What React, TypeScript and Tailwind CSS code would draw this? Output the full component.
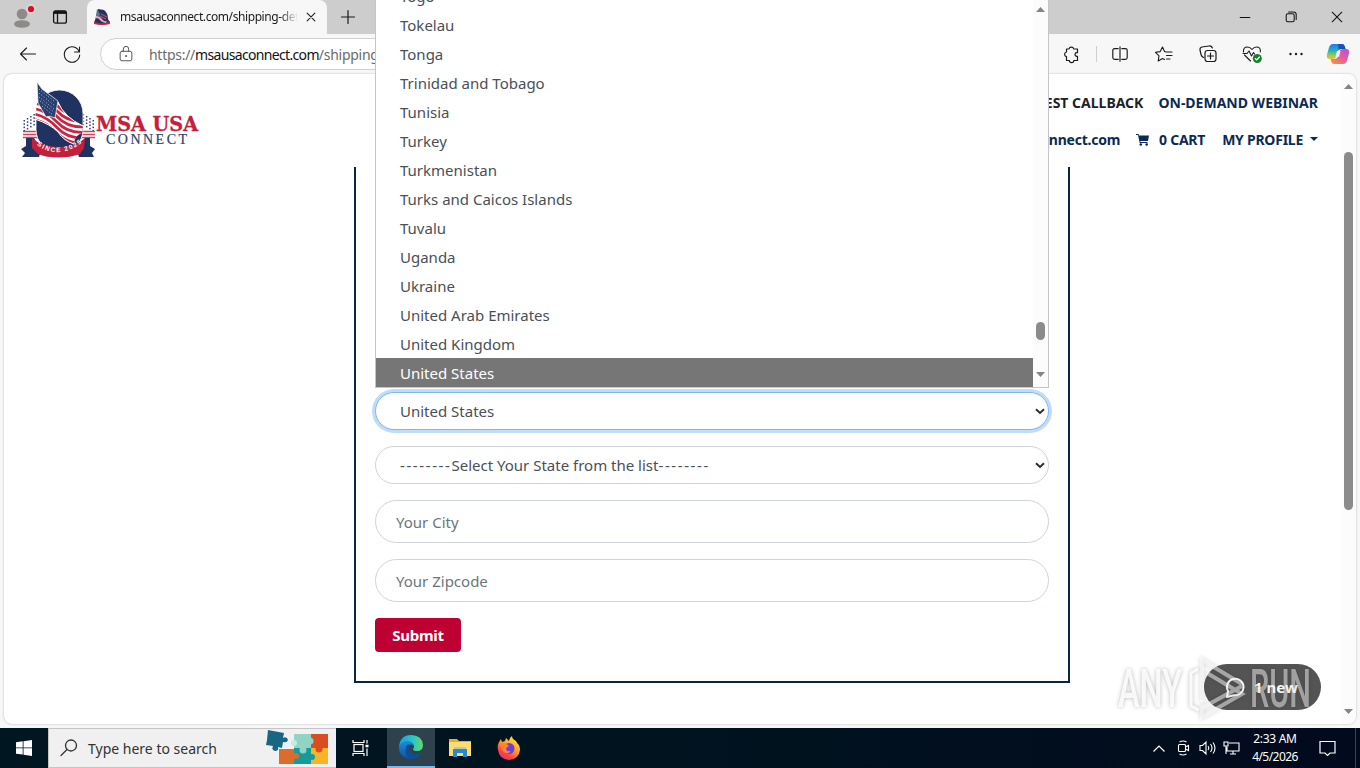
import React from "react";

const countries = [
  "Togo", "Tokelau", "Tonga", "Trinidad and Tobago", "Tunisia", "Turkey", "Turkmenistan",
  "Turks and Caicos Islands", "Tuvalu", "Uganda", "Ukraine", "United Arab Emirates",
  "United Kingdom", "United States",
];

type IconProps = { children: React.ReactNode; className?: string; size?: number; sw?: number };

function Icon({ children, className = "", size = 20, sw = 1.1 }: IconProps) {
  return (
    <svg width={size} height={size} viewBox="0 0 20 20" fill="none" stroke="currentColor" strokeWidth={sw}
      strokeLinecap="round" strokeLinejoin="round" className={`shrink-0 ${className}`}>
      {children}
    </svg>
  );
}

function Favicon() {
  return (
    <svg width="18" height="18" viewBox="0 0 18 18" className="shrink-0">
      <path d="M5 1 L11 2 Q15 5 15 11 L17 15 Q9 18 1 15 L3 9Z" fill="#25345e" />
      <path d="M4 1 L7 6 L6 9 L3 8Z" fill="#64708f" />
      <path d="M3 8 Q7 8 9 11 T14 13 L13 15 Q8 14 7 12 T2 10Z" fill="#e9a7b4" />
      <path d="M1 13 Q9 18 17 13 L17 16 Q9 18 1 16Z" fill="#c22742" />
      <path d="M8 6 L14 9 M7 8 L13 11" stroke="#d4566c" strokeWidth="1" />
    </svg>
  );
}

function TabStrip() {
  return (
    <div className="flex h-[34px] shrink-0 bg-[#cdcdcd]">
      <div className="flex w-[87px] items-center rounded-br-lg pl-3">
        <svg width="24" height="26" viewBox="0 0 24 26">
          <circle cx="10" cy="10" r="5.3" fill="#8d8a87" />
          <ellipse cx="10" cy="20" rx="8" ry="3.8" fill="#8d8a87" />
          <circle cx="19" cy="5" r="5" fill="#e6d0d2" />
          <circle cx="19" cy="5" r="3.1" fill="#d60f24" />
        </svg>
        <svg width="16" height="16" viewBox="0 0 16 16" className="ml-4" fill="none" stroke="#151515" strokeWidth="1.3">
          <rect x="1.6" y="1.8" width="12.8" height="12.4" rx="2" />
          <path d="M2 3.4H14" strokeWidth="3" />
          <path d="M5.5 3V14" />
        </svg>
      </div>
      <div className="flex w-[240px] items-center rounded-t-lg bg-[#f7f7f7] pl-[6px]">
        <Favicon />
        <div className="ml-[9px] w-[178px] overflow-hidden text-[12px] whitespace-nowrap text-[#1b1b1b] [mask-image:linear-gradient(to_right,black_160px,transparent_178px)] tracking-[-0.42px]">
          msausaconnect.com/shipping-details
        </div>
        <Icon size={14} sw={1.5} className="ml-[6px] text-[#1b1b1b]"><path d="M4.500 4.500L15.500 15.500M15.500 4.500L4.500 15.500" /></Icon>
      </div>
      <div className="flex w-[42px] items-center justify-center text-[#1b1b1b]">
        <Icon size={20} sw={1.2}><path d="M10 3.500V16.500M3.500 10H16.500" /></Icon>
      </div>
      <div className="ml-auto flex items-center text-[#111]">
        <div className="flex w-[46px] justify-center"><Icon size={16} sw={1.3}><path d="M4 10.6H16" /></Icon></div>
        <div className="flex w-[46px] justify-center">
          <Icon size={16} sw={1.3}><rect x="4" y="6" width="10" height="10" rx="2" /><path d="M7 3.7H13Q16.5 3.7 16.5 7V13" /></Icon>
        </div>
        <div className="flex w-[46px] justify-center"><Icon size={16} sw={1.3}><path d="M4 4L16 16M16 4L4 16" /></Icon></div>
      </div>
    </div>
  );
}

function CopilotLogo() {
  return (
    <svg width="24" height="24" viewBox="0 0 24 24" className="shrink-0">
      <defs>
        <linearGradient id="copA" x1="0" y1="0" x2="0" y2="1">
          <stop offset="0" stopColor="#1d7de2" /><stop offset=".45" stopColor="#25b3c4" />
          <stop offset=".75" stopColor="#9bcb45" /><stop offset="1" stopColor="#f3c228" />
        </linearGradient>
        <linearGradient id="copB" x1="1" y1="0" x2="0" y2="1">
          <stop offset="0" stopColor="#a656e6" /><stop offset=".45" stopColor="#e85a9c" /><stop offset="1" stopColor="#fb9a3c" />
        </linearGradient>
      </defs>
      <path d="M7 2H16Q18 2 18.6 4L19.5 7H15Q12.500 7 11.700 9.500L10 15Q9.300 17 7 17H4Q0 17 1 12.500L3 5.500Q4 2 7 2Z" fill="url(#copA)" />
      <path d="M17 22H8Q6 22 5.400 20L4.500 17H8.500Q11 17 11.800 14.500L13.700 9Q14.300 7 17 7H20Q24 7 23 11.500L21 18.500Q20 22 17 22Z" fill="url(#copB)" />
      <path d="M12 2H16Q18 2 18.600 4L19.500 7H15Q13.500 7 12.600 8Z" fill="#1750c5" />
      <path d="M11 9H14.500L13 14.800H9.500Z" fill="#f4f2fa" />
    </svg>
  );
}

function Toolbar() {
  return (
    <div className="flex h-10 shrink-0 items-center bg-[#f7f7f7] text-[#1b1b1b]">
      <Icon size={20} className="ml-[18px]"><path d="M17.500 10H2.500M8.500 4L2.500 10L8.500 16" /></Icon>
      <Icon size={20} className="ml-6"><path d="M17.300 8A7.700 7.700 0 1 0 17.700 11M17.500 3V8H12.500" /></Icon>
      <div className="ml-[18px] flex h-8 w-[900px] items-center rounded-full border border-[#d0d0d0] bg-white pl-4">
        <Icon size={18} className="text-[#555]">
          <rect x="3.500" y="7" width="13" height="10.500" rx="2" /><path d="M7 7V4.500a3 3 0 0 1 6 0V7" /><circle cx="10" cy="12.300" r=".6" fill="currentColor" />
        </Icon>
        <div className="ml-[14px] text-[14px] tracking-[-0.28px] whitespace-nowrap text-[#6b6b6b]">
          https://<span className="tracking-[-0.66px] text-[#111]">msausaconnect.com</span>/shipping-details
        </div>
      </div>
      <div className="ml-auto flex items-center">
        <Icon size={20} sw={1.200} className="-translate-x-px"><path d="M7 5A2.400 2.400 0 0 1 11.700 5H15.500V8.700H14.800A1.800 1.800 0 0 0 14.800 12.300H15.500V16.500H11.800A2.200 2.200 0 0 1 7.400 16.500H4.500V12.700A2.400 2.400 0 0 1 4.500 8V5Z" /></Icon>
        <div className="ml-[13px] h-4 w-px bg-[#cfcfcf]" />
        <Icon size={18} className="ml-[14px]" sw={1.3}><path d="M8 4H4Q2 4 2 6V14Q2 16 4 16H8M12 4H16Q18 4 18 6V14Q18 16 16 16H12M10 2V18" /></Icon>
        <Icon size={20} className="ml-[25px]"><path d="M12 8L10.500 7.500L8.500 3L6.200 7.600L1.500 8.300L5 11.800L4.200 17L8.500 14.500L10.500 15.500M12 8H18M12.500 11.500H18M12.500 15H16" /></Icon>
        <Icon size={20} className="ml-6" sw={1.2}><path d="M5.500 13.500Q3.500 12.500 3 10.500L2 6Q1.700 3.600 4 3L11 2Q13.500 1.700 14.400 4" /><rect x="7" y="6.500" width="11" height="11" rx="2.500" /><path d="M12.500 9V15M9.500 12H15.500" /></Icon>
        <Icon size={20} className="ml-6" sw={1.1}>
          <path d="M1.500 8Q1 3 5.500 3Q8 3 10 5.500Q12 3 14.500 3Q19 3 18.300 8M2.500 11L8.500 17M1 9.500H5L7 7L9.500 12L11.500 8.500L12.500 10" />
          <circle cx="15.300" cy="14.500" r="4.500" fill="#16812b" stroke="none" /><path d="M13.300 14.500L14.700 16L17.500 13" stroke="#fff" />
        </Icon>
        <Icon size={20} className="ml-[24px]"><g fill="currentColor" stroke="none"><circle cx="4.500" cy="10" r="1.200" /><circle cx="10" cy="10" r="1.200" /><circle cx="15.500" cy="10" r="1.200" /></g></Icon>
        <div className="mr-[10px] ml-5"><CopilotLogo /></div>
      </div>
    </div>
  );
}

function BrandLogo() {
  return (
    <svg width="182" height="78" viewBox="0 0 182 78">
      <defs>
        <path id="sinceArc" d="M16 62 Q38 80 64 59" />
        <clipPath id="flagClip"><path d="M17 21 Q26 18 38 20 Q44 35 63 44 L62 51 Q54 54 54 62 Q44 59 38 50 Q30 42 15 37Z" /></clipPath>
      </defs>
      <g fill="#2b4272">
        {[0, 1, 2, 3].map((c) => [0, 1, 2, 3].map((r) => (
          <g key={`${c}-${r}`}>
            <rect x={3.500 + c * 3.300} y={38 - c * 2 + r * 3.300} width="1.500" height="1.500" />
            <rect x={72.500 - c * 3.300} y={38 - c * 2 + r * 3.300} width="1.500" height="1.500" />
          </g>
        )))}
      </g>
      <path d="M3 49.500H18M3 52.500H18M3 55.500H18M61 49.500H75M61 52.500H75M61 55.500H75" stroke="#cf4259" strokeWidth="1.600" />
      <rect x="16" y="8" width="47" height="63" rx="23.500" fill="#1f3261" stroke="#fff" strokeWidth=".8" />
      <g clipPath="url(#flagClip)">
        <rect x="14" y="18" width="50" height="48" fill="#fff" />
        {[0, 1, 2, 3, 4, 5, 6, 7, 8].map((i) => (
          <path key={i} d={`M12 ${4 + i * 5.500} Q26 ${6 + i * 5.500} 37 ${18 + i * 5.500} T66 ${28 + i * 5.500}`} fill="none" stroke="#cb2541" strokeWidth="2.700" />
        ))}
      </g>
      <path d="M38 20 Q44 35 63 44 M15 37 Q30 42 38 50 Q44 59 54 62" fill="none" stroke="#fff" strokeWidth="1" />
      <path d="M17 0 L22 7 L38 19 L35 36 Q30 33 26 35 L18 21Z" fill="#293f70" stroke="#fff" strokeWidth=".7" />
      <path d="M19 7L35 20M19 11L35 24M19 15L34 27M20 19L34 30M22 24L33 33" stroke="#b9c6de" strokeWidth="1" strokeDasharray="1 2" />
      <path d="M1 67 L6 64 V56 L14 56 L21 69 L19 75 H2 L5 71Z M75 67 L70 64 V56 L65 56 L57 69 L59 75 H74 L72 71Z" fill="#1f3261" />
      <path d="M12 56 Q22 65 39 65 Q56 65 65 56 L64 66 L60 72 Q50 75.500 39 75.500 Q26 75.500 18 72 L12 66Z" fill="#c3203e" />
      <text fontFamily="'Liberation Sans'" fontWeight="700" fontSize="6.500" fill="#fff">
        <textPath href="#sinceArc" startOffset="1" textLength="49">SINCE 2025</textPath>
      </text>
      <text x="76" y="49" fontFamily="'DejaVu Serif', serif" fontWeight="700" fontSize="20" fill="#c3203e" stroke="#c3203e" strokeWidth=".3" textLength="102" lengthAdjust="spacingAndGlyphs">MSA USA</text>
      <text x="86" y="62" fontFamily="'Liberation Serif', serif" fontSize="14" fill="#2d4169" stroke="#2d4169" strokeWidth=".2" textLength="81">CONNECT</text>
    </svg>
  );
}

function Arrow({ up = false }: { up?: boolean }) {
  return (
    <svg width="9" height="5" viewBox="0 0 9 5" className="shrink-0">
      <path d={up ? "M0 5L4.500 0L9 5Z" : "M0 0H9L4.500 5Z"} fill="#858585" />
    </svg>
  );
}

function SiteHeader() {
  return (
    <header className="flex h-[93px] shrink-0 justify-between pt-[8px] pr-[23px] pl-4">
      <BrandLogo />
      <div className="flex flex-col items-end pt-[10px] text-[14px] leading-[22px] font-bold whitespace-nowrap text-[#0b2a53]">
        <div className="flex gap-[15px]">
          <span className="text-[#1c2229]">REQUEST CALLBACK</span>
          <span>ON-DEMAND WEBINAR</span>
        </div>
        <div className="mt-[15px] flex items-center tracking-[-0.25px]">
          <span>info@msausaconnect.com</span>
          <svg width="13" height="12" viewBox="0 0 13 12" className="mr-[10px] ml-[16px]">
            <path d="M0 0H2.600L3 1.500H13L12 7H4.300L4.500 8H11.500V9H3.700L2 1H0Z" fill="#0b2a53" />
            <circle cx="4.800" cy="10.500" r="1.300" fill="#0b2a53" /><circle cx="10.700" cy="10.500" r="1.300" fill="#0b2a53" />
          </svg>
          <span>0 CART</span>
          <span className="ml-[17px]">MY PROFILE</span>
          <svg width="8" height="4" viewBox="0 0 8 4" className="mb-[2px] ml-[7px]"><path d="M0 0H8L4 4Z" fill="#0b2a53" /></svg>
        </div>
      </div>
    </header>
  );
}

function SelectField({ children, focused = false }: { children: React.ReactNode; focused?: boolean }) {
  return (
    <div className={`flex h-[38px] items-center justify-between rounded-full border bg-white pr-[3px] pl-6 ${focused ? "border-[#80b8f0] ring-3 ring-[#bfdcfa]" : "border-[#ced4da]"}`}>
      <span>{children}</span>
      <svg width="10" height="7" viewBox="0 0 10 7" fill="none" stroke="#2b2b2b" strokeWidth="1.900"><path d="M1 1.200L5 5L9 1.200" /></svg>
    </div>
  );
}

function CountryList() {
  return (
    <div className="absolute top-0 left-[375px] z-20 flex h-[388px] w-[674px] border-x border-b border-[#c5c5c5] bg-white text-[15px] text-[#495057]">
      <ul className="flex grow flex-col justify-end overflow-hidden">
        {countries.map((c) => (
          <li key={c} className={`flex h-[29px] shrink-0 items-center pt-[2px] pl-6 ${c === "United States" ? "bg-[#767676] text-white" : ""}`}>{c}</li>
        ))}
      </ul>
      <div className="flex w-[15px] flex-col items-center bg-[#fcfcfc] pt-[7px] pb-[10px]">
        <Arrow up />
        <div className="mt-[310px] h-[18px] w-[9px] rounded-full bg-[#8b8b8b]" />
        <div className="mt-auto"><Arrow /></div>
      </div>
    </div>
  );
}

function ChatBadge() {
  return (
    <>
      <div className="absolute top-[664px] left-[1204px] flex h-[46px] w-[117px] items-center rounded-full bg-[#545454] pl-[21px] text-[15px] font-bold text-white">
        <svg width="21" height="21" viewBox="0 0 21 21" fill="none" stroke="#fff" strokeWidth="2" strokeLinejoin="round"><path d="M3 14A8.300 8.300 0 1 1 9 18.200L2 20Z" /></svg>
        <span className="ml-[8px]">1 new</span>
      </div>
      <svg className="absolute top-[652px] left-[1110px] drop-shadow-[0_0_2px_rgba(0,0,0,0.32)]" width="210" height="74" viewBox="0 0 210 74" fill="#fff" fillOpacity=".48">
        <text x="8" y="55" fontFamily="Roboto" fontWeight="500" fontSize="53" textLength="64" lengthAdjust="spacingAndGlyphs" fillOpacity=".85">ANY</text>
        <text x="140" y="55" fontFamily="Roboto" fontWeight="500" fontSize="53" textLength="61" lengthAdjust="spacingAndGlyphs">RUN</text>
        <path fill="none" stroke="#fff" strokeOpacity=".85" strokeWidth="3" d="M88 17L81 21V54L89 58" />
        <path fill="none" stroke="#fff" strokeOpacity=".5" strokeWidth="4" d="M92 50V8L132 32M97 21L132 42L92 65V56L132 34" />
      </svg>
    </>
  );
}

function JigsawArt() {
  return (
    <svg width="63" height="34" viewBox="0 0 63 34" className="-translate-y-px">
      <rect x="13" y="19" width="17" height="15" fill="#dc6b2c" /><rect x="28" y="4" width="18" height="16" fill="#91d4c3" />
      <rect x="45" y="4" width="17" height="16" fill="#d94d23" /><rect x="28" y="18" width="18" height="16" fill="#159b9c" />
      <rect x="45" y="18" width="17" height="16" fill="#f5b524" />
      <circle cx="44" cy="11" r="3.500" fill="#91d4c3" /><circle cx="37" cy="20" r="3.500" fill="#91d4c3" /><circle cx="53" cy="19" r="3.500" fill="#d94d23" />
      <circle cx="30" cy="26" r="3" fill="#dc6b2c" /><circle cx="46" cy="27" r="3" fill="#159b9c" /><circle cx="28" cy="13" r="3" fill="#c5ebdf" />
      <path d="M2 0L18 3L17 8Q21 6 22 10Q21 13 17 12L16 18L12 17Q13 21 9 21Q5 20 7 16L0 15L1 10Z" fill="#176783" />
    </svg>
  );
}

function EdgeLogo() {
  return (
    <svg width="24" height="24" viewBox="0 0 24 24">
      <defs>
        <linearGradient id="edgeTop"><stop stopColor="#1b9ee0" /><stop offset=".55" stopColor="#28c4c8" /><stop offset="1" stopColor="#65db62" /></linearGradient>
        <linearGradient id="edgeLow" x2="0" y2="1"><stop stopColor="#1b8ddb" /><stop offset="1" stopColor="#0c50a5" /></linearGradient>
      </defs>
      <path d="M0 12Q1 0 12 0Q23 0 24 10Q24 16 18 16Q14 16 14 14Q16 12 14 9Q8 3 0 12Z" fill="url(#edgeTop)" />
      <path d="M0 12Q2 6 8 6Q13 6 14.500 10Q10 8 9 13Q9 20 16 20Q19 20 22 18Q18 24 12 24Q0 23 0 12Z" fill="url(#edgeLow)" />
      <path d="M8 10Q4 18 10 23Q18 26 22 18Q17 21 13 18Q9 15 11 10Q9 9 8 10Z" fill="#124c91" />
    </svg>
  );
}

function FirefoxLogo() {
  return (
    <svg width="24" height="24" viewBox="0 0 24 24">
      <defs><linearGradient id="fox" x1=".8" y1="0" x2=".2" y2="1"><stop stopColor="#fff044" /><stop offset=".45" stopColor="#ff9b27" /><stop offset=".75" stopColor="#fb4545" /><stop offset="1" stopColor="#e5268a" /></linearGradient></defs>
      <path d="M2 6L4 3L5 6L8 5L9 2L12 5Q12 2 15 0Q15 3 19 5L20 7Q23 9 23 14Q22 23 12 24Q2 23 1 14Q0 10 2 6Z" fill="url(#fox)" />
      <circle cx="12" cy="12.500" r="5.500" fill="#743ed1" />
      <path d="M3 8Q8 5 12 10L9 12Q9 16 14 15Q11 19 7 16Q4 13 3 8Z" fill="#ff8531" />
    </svg>
  );
}

function Taskbar() {
  return (
    <div className="flex h-10 shrink-0 items-center bg-gradient-to-r from-[#001722] via-[#00131f] to-[#020a1d] text-white">
      <div className="flex w-12 justify-center">
        <svg width="16" height="16" viewBox="0 0 16 16" fill="#fff"><path d="M0 2.300L6.700 1.300V7.500H0ZM7.500 1.200L16 0V7.500H7.500ZM0 8.300H6.700V14.600L0 13.700ZM7.500 8.300H16V16L7.500 14.800Z" /></svg>
      </div>
      <div className="flex h-10 w-[288px] items-center border-y border-l border-[#c4c4c4] bg-[#f0f0f0] pr-[7px] pl-[10px] text-[#333]">
        <Icon size={20} sw={1.300}><circle cx="12" cy="7.500" r="5.500" /><path d="M8 11.500L2 17.500" /></Icon>
        <span className="ml-[9px] text-[14px]">Type here to search</span>
        <div className="ml-auto"><JigsawArt /></div>
      </div>
      <div className="flex w-[51px] justify-center pr-1">
        <svg width="18" height="18" viewBox="0 0 18 18" fill="none" stroke="#fff" strokeWidth="1.200"><rect x="3" y="5.500" width="9" height="7" /><path d="M2 1V3.500H13V1M2 17V14.500H13V17M16 1V4.500M16 9.500V17" /><path d="M14.500 7H17.500" strokeWidth="2.500" /></svg>
      </div>
      <div className="flex h-10 w-12 items-center justify-center border-b-2 border-[#76b9ed] bg-[#2e424d]"><EdgeLogo /></div>
      <div className="flex w-[49px] justify-center">
        <svg width="22" height="20" viewBox="0 0 22 20"><path d="M0 1H8L10 3H22V18H0Z" fill="#e8ac2b" /><path d="M0 4H22V18H0Z" fill="#ffdc72" /><path d="M4 11H18V19H14V15H8V19H4Z" fill="#2889cf" /><path d="M5 10H17" stroke="#71bae9" strokeWidth="1" /></svg>
      </div>
      <div className="flex w-[49px] justify-center"><FirefoxLogo /></div>
      <div className="ml-auto flex items-center">
        <svg width="12" height="7" viewBox="0 0 12 7" fill="none" stroke="#fff" strokeWidth="1.200"><path d="M.5 6.500L6 1L11.500 6.500" /></svg>
        <svg width="13" height="16" viewBox="0 0 13 16" className="ml-3" fill="none" stroke="#fff" strokeWidth="1.100"><rect x="1.500" y="4.500" width="7" height="7" rx="1" /><path d="M8.500 7L11.500 5.500V10.500L8.500 9M2.500 2Q6 0 9.500 2M2.500 14Q6 16 9.500 14" /></svg>
        <svg width="17" height="16" viewBox="0 0 17 16" className="ml-[9px]" fill="none" stroke="#fff" strokeWidth="1.100"><path d="M1 5.500H3.500L7 2V14L3.500 10.500H1ZM9 6Q10.500 8 9 10M11.500 4Q14.500 8 11.500 12M14 2.500Q18 8 14 13.500" /></svg>
        <svg width="17" height="14" viewBox="0 0 17 14" className="ml-[7px]" fill="none" stroke="#fff" strokeWidth="1.100"><path d="M6 2H16V10H4V6M7 13H13M10 10V13M1 1H5V5H1ZM3 5V13" /></svg>
        <div className="mr-px ml-[8px] w-[54px] text-center text-[12px] leading-[18px] whitespace-nowrap">
          <div className="tracking-[-0.3px]">2:33 AM</div><div className="tracking-[-0.55px]">4/5/2026</div>
        </div>
        <svg width="17" height="17" viewBox="0 0 17 17" className="ml-[16px]" fill="none" stroke="#fff" strokeWidth="1.200"><path d="M1 1.500H16V13H11L8.500 15.500L6 13H1Z" /></svg>
        <div className="ml-[19px] h-10 w-px bg-[#3d4352]" /><div className="w-1" />
      </div>
    </div>
  );
}

export default function App() {
  return (
    <div className="relative flex h-[768px] w-[1360px] flex-col overflow-hidden bg-[#f7f7f7] font-['Noto_Sans',sans-serif]">
      <TabStrip />
      <Toolbar />
      <div className="mx-1 mb-1 flex h-[650px] shrink-0 overflow-hidden rounded-lg bg-white shadow-[0_0_2px_rgba(0,0,0,0.3)]">
        <main className="flex w-[1337px] flex-col">
          <SiteHeader />
          <form className="ml-[350px] flex h-[516px] w-[716px] flex-col gap-4 border-x-2 border-b-2 border-[#0b2545] px-[19px] pt-[225px] text-[15px] text-[#495057]">
            <SelectField focused>United States</SelectField>
            <SelectField>
              <span className="tracking-[1.6px]">--------</span>Select Your State from the list<span className="tracking-[1.6px]">--------</span>
            </SelectField>
            <div className="flex h-[43px] items-center rounded-full border border-[#ced4da] pt-[2px] pl-5 text-[#6c757d]">Your City</div>
            <div className="flex h-[43px] items-center rounded-full border border-[#ced4da] pt-[2px] pl-5 text-[#6c757d]">Your Zipcode</div>
            <div className="flex h-[34px] w-[86px] items-center justify-center rounded-[4px] bg-[#bf0032] font-bold tracking-[-0.3px] text-white">Submit</div>
          </form>
        </main>
        <div className="flex w-[15px] flex-col items-center bg-[#fcfcfc] pt-[10px] pb-[10px]">
          <Arrow up />
          <div className="mt-[63px] h-[358px] w-[9px] rounded-full bg-[#8b8b8b]" />
          <div className="mt-auto"><Arrow /></div>
        </div>
      </div>
      <Taskbar />
      <CountryList />
      <ChatBadge />
    </div>
  );
}
